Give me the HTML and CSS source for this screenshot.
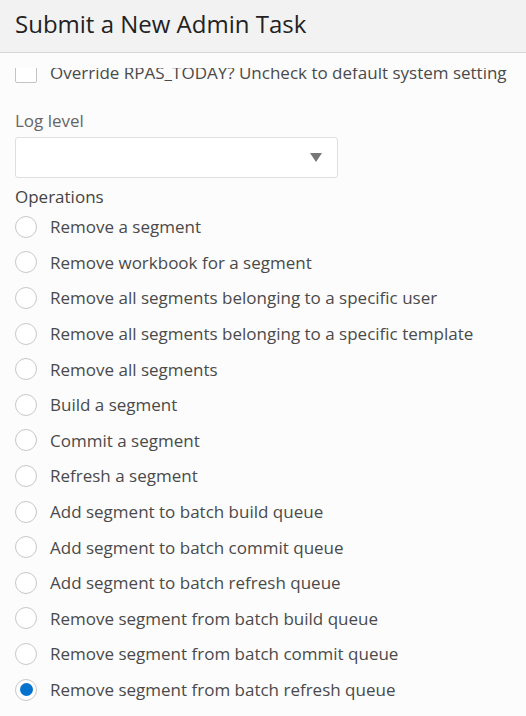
FILE: index.html
```html
<!doctype html>
<html>
	<head>
		<title>Submit a New Admin Task</title>
		<link rel="stylesheet" href="styles.css">
	</head>

	<body>
		<div class="dialog">
			<div class="dialog-header">
				<h1>Submit a New Admin Task</h1>
			</div>

			<div class="dialog-body">
				<div class="scroll-area">
					<label class="check-row">
						<span class="checkbox"></span>
						Override RPAS_TODAY? Uncheck to default system setting
					</label>

					<div class="field-label">Log level</div>
					<div class="select">
						<span class="select-arrow"></span>
					</div>

					<div class="field-label operations-label">Operations</div>
					<div class="radio-list">
						<label class="radio-row"><span class="radio"></span>Remove a segment</label>
						<label class="radio-row"><span class="radio"></span>Remove workbook for a segment</label>
						<label class="radio-row"><span class="radio"></span>Remove all segments belonging to a specific user</label>
						<label class="radio-row"><span class="radio"></span>Remove all segments belonging to a specific template</label>
						<label class="radio-row"><span class="radio"></span>Remove all segments</label>
						<label class="radio-row"><span class="radio"></span>Build a segment</label>
						<label class="radio-row"><span class="radio"></span>Commit a segment</label>
						<label class="radio-row"><span class="radio"></span>Refresh a segment</label>
						<label class="radio-row"><span class="radio"></span>Add segment to batch build queue</label>
						<label class="radio-row"><span class="radio"></span>Add segment to batch commit queue</label>
						<label class="radio-row"><span class="radio"></span>Add segment to batch refresh queue</label>
						<label class="radio-row"><span class="radio"></span>Remove segment from batch build queue</label>
						<label class="radio-row"><span class="radio"></span>Remove segment from batch commit queue</label>
						<label class="radio-row"><span class="radio checked"></span>Remove segment from batch refresh queue</label>
					</div>
				</div>
			</div>
		</div>
	</body>
</html>
```

FILE: styles.css
```css
:root {
	--header-bg: #f2f2f2;
	--border: #d6d6d6;
	--control-border: #dfdfdf;
	--text: #333;
	--text-muted: #666;
	--accent: #0572ce;
}

body {
	margin: 0;
	font-family: "Open Sans", "Noto Sans", sans-serif;
	color: var(--text);
	background-color: #fff;
}

.dialog {
	width: 526px;
	height: 716px;
	overflow: hidden;
	background-color: #fcfcfc;
}

.dialog-header {
	height: 53px;
	background-color: var(--header-bg);
	border-bottom: 1px solid var(--border);
	box-sizing: border-box;
	padding: 0 15px;
	display: flex;
	align-items: center;
}

.dialog-header h1 {
	margin: 0 0 6px 0;
	font-size: 24px;
	font-weight: 400;
	color: #222;
}

.dialog-body {
	padding-top: 15px;
}

/* content is scrolled a little, first row sits under the top edge */
.scroll-area {
	overflow: hidden;
	padding: 0 15px;
}

.check-row {
	display: flex;
	align-items: center;
	gap: 13px;
	height: 22px;
	margin-top: -7px;
	font-size: 17px;
	color: #4a4a4a;
	white-space: nowrap;
}

.checkbox {
	width: 20px;
	height: 20px;
	border: 1px solid #c4c4c4;
	border-radius: 2px;
	background-color: #fff;
	flex-shrink: 0;
}

.field-label {
	margin-top: 27px;
	height: 22px;
	line-height: 22px;
	font-size: 17px;
	color: var(--text-muted);
}

.operations-label {
	margin-top: 8px;
	color: #444;
}

.select {
	margin-top: 5px;
	width: 323px;
	height: 41px;
	box-sizing: border-box;
	border: 1px solid var(--control-border);
	border-radius: 3px;
	background-color: #fff;
	display: flex;
	align-items: center;
	justify-content: flex-end;
	padding-right: 15px;
}

.select-arrow {
	width: 0;
	height: 0;
	border-left: 6px solid transparent;
	border-right: 6px solid transparent;
	border-top: 9px solid #777;
}

.radio-list {
	margin-top: 1px;
	display: flex;
	flex-direction: column;
}

.radio-row {
	display: flex;
	align-items: center;
	gap: 13px;
	height: 35.6px;
	font-size: 17px;
	color: #4a4a4a;
}

.radio {
	width: 20px;
	height: 20px;
	border: 1px solid #c8c8c8;
	border-radius: 50%;
	background-color: #fff;
	flex-shrink: 0;
	display: flex;
	align-items: center;
	justify-content: center;
}

.radio.checked::after {
	content: "";
	width: 13px;
	height: 13px;
	border-radius: 50%;
	background-color: var(--accent);
}
```
